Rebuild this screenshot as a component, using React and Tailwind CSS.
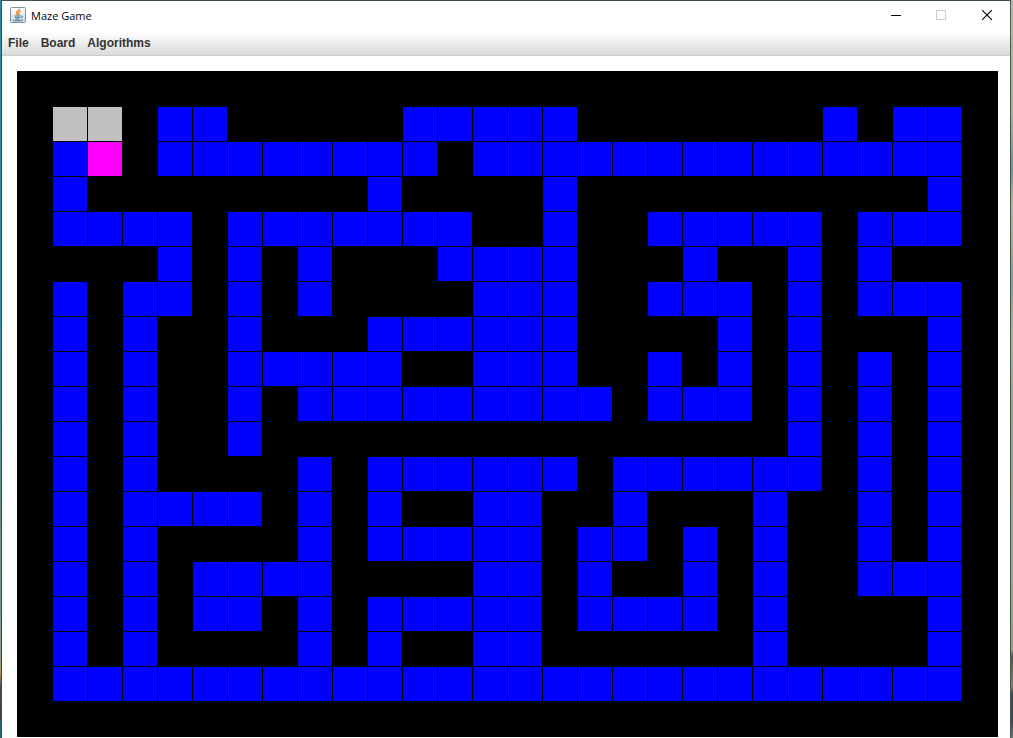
const MAZE = [
  "gg.##.....#####.......#.##",
  "#m.########.##############",
  "#........#....#..........#",
  "####.#######..#..#####.###",
  "...#.#.#...####...#..#.#..",
  "#.##.#.#....###..###.#.###",
  "#.#..#...######....#.#...#",
  "#.#..#####..###..#.#.#.#.#",
  "#.#..#.#########.###.#.#.#",
  "#.#..#...............#.#.#",
  "#.#....#.######.######.#.#",
  "#.####.#.#..##..#...#..#.#",
  "#.#....#.#####.##.#.#..#.#",
  "#.#.####....##.#..#.#..###",
  "#.#.##.#.#####.####.#....#",
  "#.#....#.#..##......#....#",
  "##########################",
];

// The outer wall is one cell thick on every side.
const WALL = ".".repeat(28);
const CELLS = [WALL, ...MAZE.map((row) => `.${row}.`), WALL].join("").split("");

const CELL_STYLES = {
  ".": "bg-black",
  "#": "bg-[#0000ff]",
  g: "bg-[#c0c0c0]",
  m: "bg-[#ff00ff]",
};

function JavaIcon() {
  return (
    <svg width="16" height="16" viewBox="0 0 16 16" fill="none" aria-hidden="true">
      <defs>
        <linearGradient id="tile" x1="0" y1="0" x2="0" y2="1">
          <stop offset="0" stopColor="#ffffff" />
          <stop offset="1" stopColor="#c9d6e1" />
        </linearGradient>
      </defs>
      <rect x="0.5" y="0.5" width="15" height="15" rx="1" fill="url(#tile)" stroke="#7f90a0" />
      <path d="M9.4 1.8c.6 1.8-3.1 2.5-2.9 4.3.1.8.9 1.2 1.2 2M10.8 4.2C9.2 4.7 8.3 5.5 8.7 6.3c.3.6.2 1.1-.3 1.7" stroke="#e57a1c" strokeWidth="1.2" />
      <path d="M4.4 9h6.2M5 10.7h5M5.4 12.2h4M10.9 9.1c2.1-.5 2.1 1.5-.2 2.2M3 12.7c-.4 1.5 8.8 1.6 9.8 0" stroke="#4b7896" strokeWidth="1" />
    </svg>
  );
}

function TitleBar() {
  return (
    <header className="flex h-7 items-center pl-2">
      <JavaIcon />
      <h1 className="ml-[5px] flex-1 pt-px font-['Open_Sans',sans-serif] text-[11px] leading-4 text-black">Maze Game</h1>
      <div className="flex h-full text-black">
        <button type="button" aria-label="Minimize" className="grid w-[45px] place-items-center">
          <svg width="10" height="10" viewBox="0 0 10 10" shapeRendering="crispEdges">
            <path d="M0 5.5h10" stroke="currentColor" />
          </svg>
        </button>
        <button type="button" aria-label="Maximize" disabled className="grid w-[46px] place-items-center text-[#cccccc]">
          <svg width="10" height="10" viewBox="0 0 10 10" fill="none" shapeRendering="crispEdges">
            <path d="M.5.5h9v9h-9z" stroke="currentColor" />
          </svg>
        </button>
        <button type="button" aria-label="Close" className="grid w-[46px] place-items-center">
          <svg width="10" height="10" viewBox="0 0 10 10">
            <path d="M0 0l10 10M10 0L0 10" stroke="currentColor" strokeWidth="1.1" />
          </svg>
        </button>
      </div>
    </header>
  );
}

function MenuBar() {
  return (
    <nav className="flex h-[27px] items-center gap-3 border-b border-[#cccccc] bg-linear-to-b from-white from-10% to-[#dadada] px-[6px] pt-[2px] font-['Liberation_Sans',sans-serif] text-[12px] leading-4 font-bold text-[#333333]">
      {["File", "Board", "Algorithms"].map((label) => (
        <button key={label} type="button">
          {label}
        </button>
      ))}
    </nav>
  );
}

export default function App() {
  return (
    <div className="flex min-h-screen">
      <div className="w-px bg-[linear-gradient(#2b8ba0_0%,#2f8fa3_45%,#5f9290_65%,#8a9c80_90%,#c09a58_91%,#4a4a50_93%,#3f4248_97%,#2a6478_98%)]" />
      <div className="flex-1 border border-b-0 border-t-[#3f4f50] border-r-[#4f554c] border-l-[#24535c] bg-white">
        <TitleBar />
        <MenuBar />
        <main className="pt-[15px] pr-3 pl-[15px]">
          <div role="img" aria-label="Maze board" className="grid grid-cols-[repeat(28,1fr)] gap-px bg-black p-px">
            {CELLS.map((cell, i) => (
              <div key={i} className={`aspect-square ${CELL_STYLES[cell]}`} />
            ))}
          </div>
        </main>
      </div>
      <div className="w-[2px] bg-[linear-gradient(#b2bf9f_0%,#a3b598_15%,#5f9a98_23%,#b0bb98_28%,#74a398_38%,#a9b696_46%,#85a893_55%,#97a68b_75%,#93a083_88%,#4f5850_89%,#7d826c_93%,#3c4a50_94%,#34505c_98%,#5d7c7a_100%)]" />
    </div>
  );
}
